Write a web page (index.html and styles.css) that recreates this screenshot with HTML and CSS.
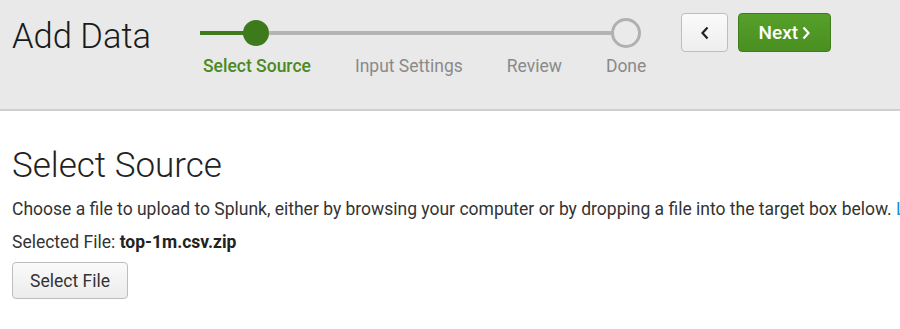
FILE: index.html
```html
<!DOCTYPE html>
<html>
<head>
<meta charset="utf-8">
<link rel="stylesheet" href="styles.css">
</head>
<body>
<header class="topbar">
  <h1 class="title">Add Data</h1>
  <div class="steps">
    <div class="step step-first">
      <div class="track"><span class="seg seg-l seg-done"></span><span class="dot dot-active"></span><span class="seg seg-r"></span></div>
      <div class="label label-active">Select Source</div>
    </div>
    <div class="step">
      <div class="track"><span class="seg seg-l"></span><span class="seg seg-r"></span></div>
      <div class="label">Input Settings</div>
    </div>
    <div class="step">
      <div class="track"><span class="seg seg-l"></span><span class="seg seg-r"></span></div>
      <div class="label">Review</div>
    </div>
    <div class="step step-last">
      <div class="track"><span class="seg seg-l"></span><span class="dot dot-open"></span><span class="seg seg-r seg-none"></span></div>
      <div class="label">Done</div>
    </div>
  </div>
  <div class="nav">
    <button class="btn btn-back"><svg width="10" height="14" viewBox="0 0 10 14"><path d="M7.5 1.5 L2.5 7 L7.5 12.5" fill="none" stroke="#222" stroke-width="2.2"/></svg></button>
    <button class="btn btn-next">Next <svg width="9" height="14" viewBox="0 0 9 14"><path d="M1.5 1.5 L6.5 7 L1.5 12.5" fill="none" stroke="#fff" stroke-width="2.2"/></svg></button>
  </div>
</header>
<main class="content">
  <h2 class="heading">Select Source</h2>
  <p class="desc">Choose a file to upload to Splunk, either by browsing your computer or by dropping a file into the target box below. <a class="more">Learn More</a></p>
  <p class="selected">Selected File: <b>top-1m.csv.zip</b></p>
  <button class="btn btn-file">Select File</button>
</main>
</body>
</html>
```
FILE: styles.css
```css
html, body { margin: 0; padding: 0; }
body {
  font-family: Roboto, "Liberation Sans", sans-serif;
  color: #333;
  background: #fff;
  width: 900px;
  overflow: hidden;
  white-space: nowrap;
}
.topbar {
  height: 109px;
  background: #e9e9e9;
  border-bottom: 2px solid #cfcfcf;
  display: flex;
  align-items: flex-start;
  box-sizing: content-box;
}
.title {
  margin: 15px 0 0 12px;
  font-size: 34.5px;
  font-weight: 300;
  color: #1a1a1a;
  line-height: 42px;
  width: 188px;
}
.steps {
  display: flex;
  margin-top: 18px;
}
.step {
  display: flex;
  flex-direction: column;
  align-items: stretch;
  padding: 0 22px;
}
.step-first { padding-left: 3px; }
.track {
  display: flex;
  align-items: center;
  height: 30px;
  margin: 0 -22px;
}
.step-first .track { margin-left: -3px; }
.seg {
  height: 4px;
  background: #b4b4b4;
}
.seg-l, .seg-r { flex: 1 1 22px; }
.step-first .seg-l { flex-basis: 3px; }
.seg-done { background: #3f7a1d; margin-right: -1px; }
.seg-none { background: transparent; }
.dot {
  flex: none;
  border-radius: 50%;
  box-sizing: border-box;
}
.dot-active {
  width: 26px;
  height: 26px;
  background: #3d7a1c;
}
.dot-open {
  width: 30px;
  height: 30px;
  border: 3.5px solid #b0b0b0;
  background: #eaeaea;
}
.label {
  margin-top: 8px;
  font-size: 17.5px;
  color: #8a8a8a;
  line-height: 20px;
  text-align: center;
}
.label-active {
  color: #4b8a22;
  font-weight: 500;
}
.nav {
  display: flex;
  gap: 10px;
  margin: 13px 0 0 13px;
}
.btn {
  font-family: Roboto, "Liberation Sans", sans-serif;
  border-radius: 4px;
  box-sizing: border-box;
  cursor: pointer;
  display: inline-flex;
  align-items: center;
  justify-content: center;
}
.btn-back {
  width: 47px;
  height: 39px;
  border: 1px solid #bdbdbd;
  background: linear-gradient(#fafafa, #eeeeee);
}
.btn-next {
  width: 93px;
  height: 39px;
  border: 1px solid #3e7b1c;
  background: linear-gradient(#56a02a, #4a8f21);
  color: #fff;
  font-size: 19px;
  font-weight: 500;
  gap: 4px;
  padding: 0;
}
.content {
  padding: 0 12px;
}
.heading {
  margin: 33px 0 0;
  font-size: 35px;
  font-weight: 300;
  color: #222;
  line-height: 44px;
}
.desc {
  margin: 10px 0 0;
  font-size: 17.5px;
  line-height: 22px;
  color: #333;
}
.more { color: #1a8fd8; }
.selected {
  margin: 11px 0 0;
  font-size: 17.5px;
  line-height: 22px;
  color: #333;
}
.selected b { font-weight: 700; color: #222; }
.btn-file {
  margin-top: 9px;
  width: 116px;
  height: 37px;
  border: 1px solid #bdbdbd;
  background: linear-gradient(#fafafa, #ececec);
  color: #333;
  font-size: 17.5px;
}
```
